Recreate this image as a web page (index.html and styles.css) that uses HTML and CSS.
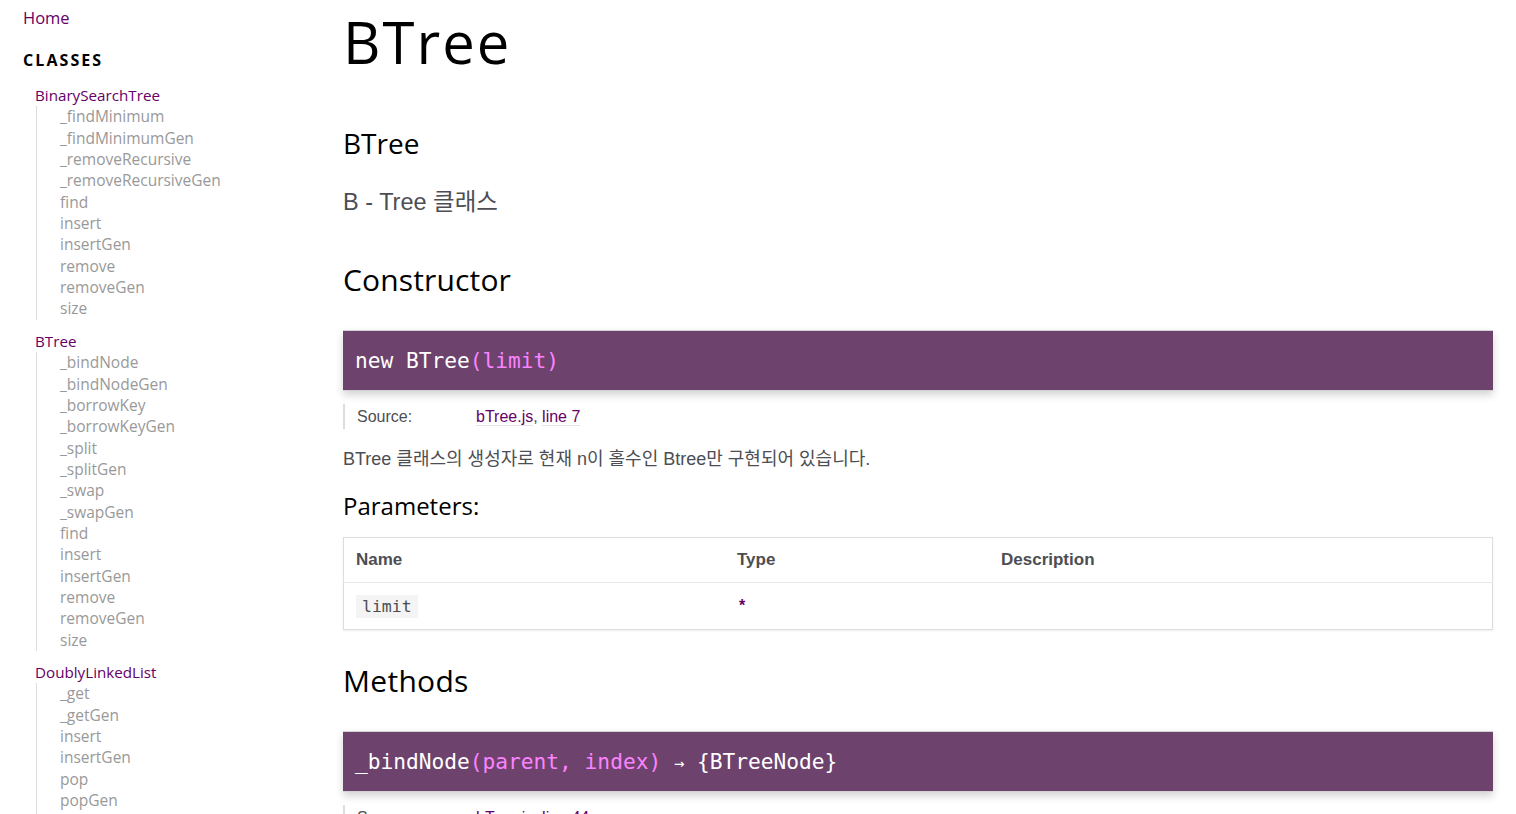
FILE: index.html
```html
<!DOCTYPE html>
<html lang="ko">
<head>
<meta charset="utf-8">
<title>BTree</title>
<link rel="stylesheet" href="styles.css">
</head>
<body>
<div class="page">
  <nav class="nav">
    <a class="home" href="#">Home</a>
    <h3 class="nav-title">Classes</h3>
    <ul class="classes">
      <li class="cls"><a class="cls-link" href="#">BinarySearchTree</a>
        <ul class="members">
          <li><a href="#">_findMinimum</a></li>
          <li><a href="#">_findMinimumGen</a></li>
          <li><a href="#">_removeRecursive</a></li>
          <li><a href="#">_removeRecursiveGen</a></li>
          <li><a href="#">find</a></li>
          <li><a href="#">insert</a></li>
          <li><a href="#">insertGen</a></li>
          <li><a href="#">remove</a></li>
          <li><a href="#">removeGen</a></li>
          <li><a href="#">size</a></li>
        </ul>
      </li>
      <li class="cls"><a class="cls-link" href="#">BTree</a>
        <ul class="members">
          <li><a href="#">_bindNode</a></li>
          <li><a href="#">_bindNodeGen</a></li>
          <li><a href="#">_borrowKey</a></li>
          <li><a href="#">_borrowKeyGen</a></li>
          <li><a href="#">_split</a></li>
          <li><a href="#">_splitGen</a></li>
          <li><a href="#">_swap</a></li>
          <li><a href="#">_swapGen</a></li>
          <li><a href="#">find</a></li>
          <li><a href="#">insert</a></li>
          <li><a href="#">insertGen</a></li>
          <li><a href="#">remove</a></li>
          <li><a href="#">removeGen</a></li>
          <li><a href="#">size</a></li>
        </ul>
      </li>
      <li class="cls"><a class="cls-link" href="#">DoublyLinkedList</a>
        <ul class="members">
          <li><a href="#">_get</a></li>
          <li><a href="#">_getGen</a></li>
          <li><a href="#">insert</a></li>
          <li><a href="#">insertGen</a></li>
          <li><a href="#">pop</a></li>
          <li><a href="#">popGen</a></li>
          <li><a href="#">push</a></li>
          <li><a href="#">pushGen</a></li>
        </ul>
      </li>
    </ul>
  </nav>
  <main class="main">
    <h1 class="page-title">BTree</h1>
    <h2 class="class-name">BTree</h2>
    <div class="class-desc">B - Tree 클래스</div>
    <h2 class="subsection">Constructor</h2>
    <h4 class="name"><span>new BTree</span><span class="signature">(limit)</span></h4>
    <dl class="details">
      <dt>Source:</dt>
      <dd><a class="src" href="#">bTree.js</a>, <a class="src" href="#">line 7</a></dd>
    </dl>
    <p class="desc">BTree 클래스의 생성자로 현재 n이 홀수인 Btree만 구현되어 있습니다.</p>
    <h3 class="sub-title">Parameters:</h3>
    <table class="params">
      <thead>
        <tr><th class="col-name">Name</th><th class="col-type">Type</th><th>Description</th></tr>
      </thead>
      <tbody>
        <tr><td><code>limit</code></td><td><span class="type">*</span></td><td></td></tr>
      </tbody>
    </table>
    <h2 class="subsection methods">Methods</h2>
    <h4 class="name method-name"><span>_bindNode</span><span class="signature">(parent, index)</span><span class="type-sig"> <span class="arrow">→</span> {BTreeNode}</span></h4>
    <dl class="details">
      <dt>Source:</dt>
      <dd><a class="src" href="#">bTree.js</a>, <a class="src" href="#">line 44</a></dd>
    </dl>
  </main>
</div>
</body>
</html>
```
FILE: styles.css
```css
html, body {
  margin: 0;
  padding: 0;
  height: 100%;
  overflow: hidden;
  background: #fff;
}
body {
  font-family: "Liberation Sans", "Noto Sans CJK KR", sans-serif;
  color: #4d4e53;
  font-size: 16px;
}
a {
  text-decoration: none;
  color: #660066;
}
.page {
  display: grid;
  grid-template-columns: 343px 1fr;
}
.nav {
  padding: 8px 0 0 23px;
  font-family: "Open Sans", sans-serif;
}
.home {
  display: block;
  font-size: 16.5px;
  line-height: 20px;
  color: #660066;
}
.nav-title {
  margin: 22px 0 0;
  font-size: 16px;
  line-height: 20px;
  font-weight: 700;
  letter-spacing: 0.13em;
  text-transform: uppercase;
  color: #000;
}
.classes {
  list-style: none;
  margin: 15px 0 0;
  padding: 0 0 0 12px;
}
.cls {
  margin-bottom: 11.3px;
}
.cls-link {
  display: block;
  font-size: 15.2px;
  line-height: 21.33px;
  color: #660066;
}
.members {
  list-style: none;
  margin: 0 0 0 1px;
  padding: 0 0 0 23px;
  border-left: 1px solid #dcdcdc;
}
.members a {
  display: block;
  font-size: 15.5px;
  line-height: 21.33px;
  color: #999;
}
.main {
  padding-right: 23px;
  min-width: 0;
}
.page-title {
  margin: 7px 0 0;
  font-family: "Open Sans", sans-serif;
  font-weight: 400;
  font-size: 58px;
  line-height: 70px;
  color: #000;
  letter-spacing: 0.035em;
}
.class-name {
  margin: 49px 0 0;
  font-family: "Open Sans", sans-serif;
  font-weight: 400;
  font-size: 28px;
  line-height: 34px;
  color: #000;
}
.class-desc {
  margin-top: 27px;
  font-size: 23.5px;
  line-height: 30px;
  color: #4d4e53;
}
.subsection {
  margin: 44px 0 0;
  font-family: "Open Sans", sans-serif;
  font-weight: 400;
  font-size: 30px;
  line-height: 38px;
  color: #000;
  letter-spacing: 0.005em;
}
.subsection.methods {
  margin-top: 32px;
  letter-spacing: 0.01em;
}
.name {
  margin: 31px 0 0;
  height: 59px;
  box-sizing: content-box;
  display: flex;
  align-items: center;
  padding: 0 0 0 12px;
  background: #6d426d;
  border-top: 1px solid #d3d3d3;
  border-bottom: 1px solid #d3d3d3;
  box-shadow: 0 4px 8px #d3d3d3;
  color: #fff;
  font-family: "DejaVu Sans Mono", monospace;
  font-weight: 400;
  font-size: 21.2px;
  white-space: pre;
}
.method-name {
  margin-top: 31px;
}
.signature {
  color: #fc83ff;
}
.type-sig {
  color: #fff;
}
.arrow {
  font-size: 17px;
}
.details {
  margin: 13px 0 0;
  padding-left: 12px;
  border-left: 2px solid #ddd;
  display: flex;
  height: 25px;
  line-height: 25px;
  font-size: 16px;
}
.details dt {
  width: 119px;
  margin: 0;
  color: #4d4e53;
}
.details dd {
  margin: 0;
}
.src {
  color: #660066;
  border-bottom: 1px solid #e4e4e4;
}
.desc {
  margin: 16px 0 0;
  font-size: 18px;
  line-height: 28px;
  color: #4d4e53;
}
.sub-title {
  margin: 18px 0 0;
  font-family: "Open Sans", sans-serif;
  font-weight: 400;
  font-size: 24px;
  line-height: 30px;
  color: #000;
}
.params {
  margin-top: 16px;
  width: 100%;
  border-collapse: collapse;
  border: 1px solid #ddd;
  box-shadow: 0 1px 2px #eee;
}
.params th {
  text-align: left;
  font-weight: 700;
  font-size: 17px;
  color: #4d4e53;
  height: 44px;
  padding: 0 12px;
  border-bottom: 1px solid #e8e8e8;
}
.params td {
  height: 46px;
  padding: 0 12px;
  vertical-align: middle;
}
.col-name {
  width: 357px;
}
.col-type {
  width: 240px;
}
.params code {
  font-family: "DejaVu Sans Mono", monospace;
  font-size: 16.5px;
  background: #f4f4f4;
  padding: 2px 6px;
  color: #4d4e53;
}
.type {
  display: inline-block;
  margin-left: 2px;
  color: #660066;
  font-weight: 700;
  font-size: 16px;
}
```
